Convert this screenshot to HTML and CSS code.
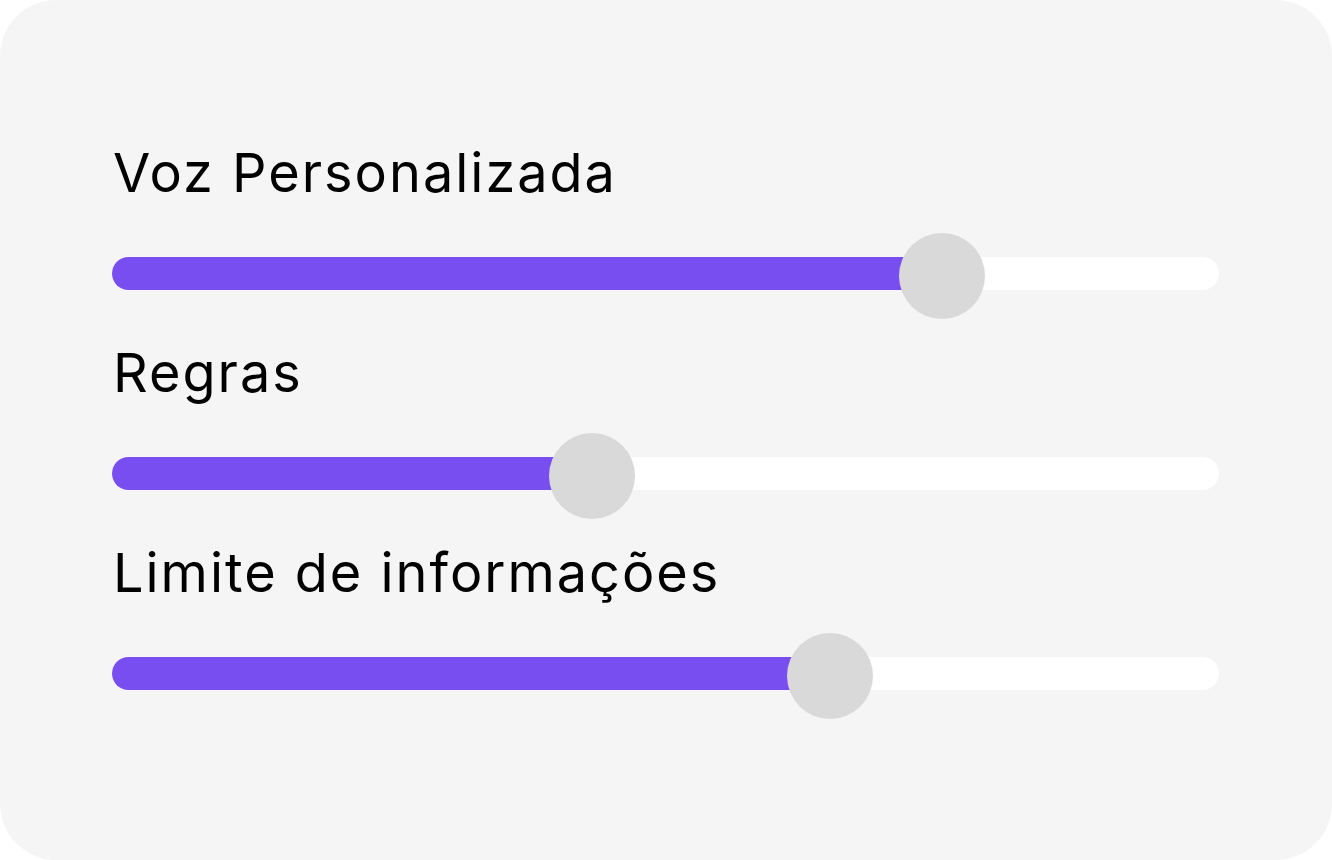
FILE: index.html
```html
<!DOCTYPE html>
<html lang="pt-BR">
<head>
    <meta charset="UTF-8">
    <meta name="viewport" content="width=device-width, initial-scale=1.0">
    <title>Configurações</title>
    <link rel="stylesheet" href="styles.css">
</head>
<body>

    <div class="card">
        <div class="setting">
            <p class="label">Voz Personalizada</p>
            <div class="track">
                <div class="fill" style="width: 75%"></div>
                <span class="knob" style="left: 75%"></span>
            </div>
        </div>

        <div class="setting">
            <p class="label">Regras</p>
            <div class="track">
                <div class="fill" style="width: 43.4%"></div>
                <span class="knob" style="left: 43.4%"></span>
            </div>
        </div>

        <div class="setting">
            <p class="label">Limite de informações</p>
            <div class="track">
                <div class="fill" style="width: 64.9%"></div>
                <span class="knob" style="left: 64.9%"></span>
            </div>
        </div>
    </div>

</body>
</html>
```

FILE: styles.css
```css
body {
    margin: 0;
    background-color: #fff;
    font-family: Inter, "Noto Sans", sans-serif;
}

.card {
    box-sizing: border-box;
    width: 1332px;
    height: 860px;
    padding: 146px 113px 0 112px;
    background-color: #f5f5f5;
    border-radius: 56px;
    display: flex;
    flex-direction: column;
    gap: 56px;
}

.label {
    margin: 0 0 57px 1px;
    font-size: 54px;
    line-height: 54px;
    font-weight: 400;
    letter-spacing: 2px;
    color: #000;
}

.track {
    position: relative;
    height: 33px;
    background-color: #fff;
    border-radius: 17px;
}

.fill {
    height: 100%;
    background-color: #794ef0;
    border-radius: 17px 0 0 17px;
}

.knob {
    position: absolute;
    top: 19px;
    width: 86px;
    height: 86px;
    margin: -43px 0 0 -43px;
    background-color: #d9d9d9;
    border-radius: 50%;
}
```
